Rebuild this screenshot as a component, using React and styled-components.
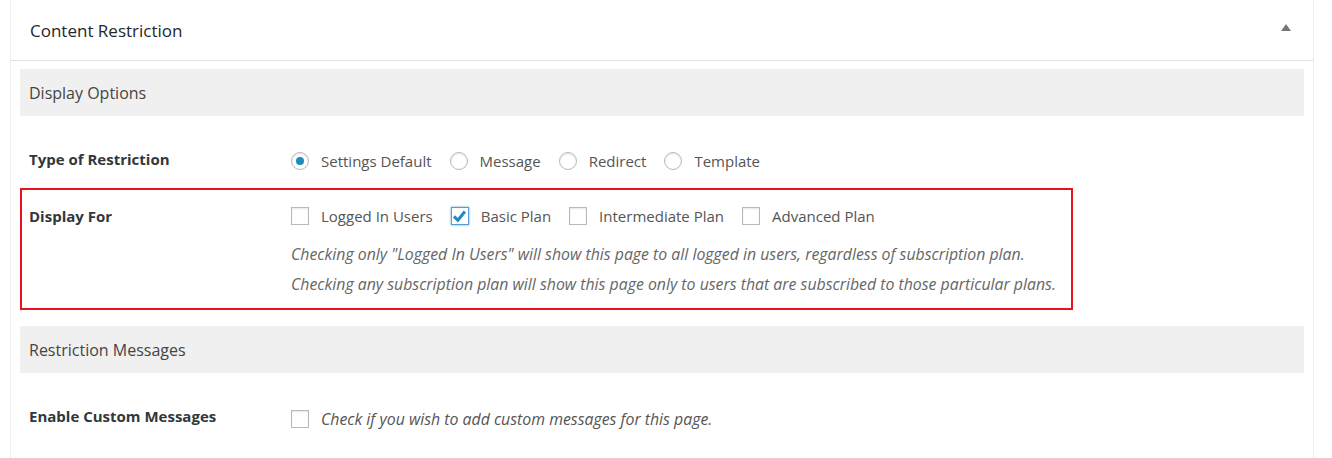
import React from "react";
import styled, { createGlobalStyle } from "styled-components";

const GlobalStyle = createGlobalStyle`
    html, body {
        margin: 0;
        padding: 0;
        background: #fff;
    }
    body {
        font-family: "Open Sans", "Noto Sans", sans-serif;
        font-size: 15px;
        color: #444;
    }
`;

const Postbox = styled.div`
    margin: 0 18px 0 10px;
    border-left: 1px solid #eeeeee;
    border-right: 1px solid #eeeeee;
    background: #fff;
    min-height: 458px;
    box-sizing: border-box;
`;

const Header = styled.div`
    height: 61px;
    display: flex;
    align-items: center;
    justify-content: space-between;
    padding: 0 22px 0 19px;
    border-bottom: 1px solid #e2e2e2;
    box-sizing: border-box;
`;

const Title = styled.h2`
    margin: 0;
    font-size: 17px;
    font-weight: 400;
    color: #23282d;
`;

const Toggle = styled.span`
    width: 0;
    height: 0;
    border-left: 5px solid transparent;
    border-right: 5px solid transparent;
    border-bottom: 7px solid #72777c;
    margin-top: -6px;
`;

const Inside = styled.div`
    padding: 8px 9px 0 9px;
`;

const SectionBar = styled.div`
    height: 47px;
    background: #f0f0f0;
    display: flex;
    align-items: center;
    padding-left: 9px;
    font-size: 16px;
    color: #444;
`;

const Row = styled.div`
    display: flex;
    align-items: flex-start;
    height: 72px;
    box-sizing: border-box;
    padding: 33px 9px 0 9px;
`;

const Highlight = styled.div`
    width: 1053px;
    height: 122px;
    box-sizing: border-box;
    border: 2px solid #e8141c;
    margin-bottom: 16px;
    display: flex;
    align-items: flex-start;
    padding: 16px 0 0 7px;
`;

const Label = styled.div`
    width: 262px;
    flex-shrink: 0;
    font-weight: 700;
    font-size: 15px;
    line-height: 20px;
    color: #32373c;
`;

const Field = styled.div`
    display: flex;
    flex-direction: column;
    margin-top: ${({ $offset }) => $offset || 0}px;
`;

const Options = styled.div`
    display: flex;
    align-items: center;
    line-height: 20px;
`;

const Option = styled.label`
    display: flex;
    align-items: center;
    margin-right: 18px;
    color: #555;
    font-size: 15px;
`;

const Radio = styled.span`
    width: 16px;
    height: 16px;
    border-radius: 50%;
    border: 1px solid #b4b9be;
    box-shadow: inset 0 1px 2px rgba(0, 0, 0, 0.1);
    display: flex;
    align-items: center;
    justify-content: center;
    margin-right: 12px;
    flex-shrink: 0;

    &::after {
        content: "";
        width: 8px;
        height: 8px;
        border-radius: 50%;
        background: #1e8cbe;
        display: ${({ $checked }) => ($checked ? "block" : "none")};
    }
`;

const Box = styled.span`
    width: 16px;
    height: 16px;
    border: 1px solid ${({ $checked }) => ($checked ? "#5b9dd9" : "#b4b9be")};
    box-shadow: ${({ $checked }) =>
        $checked
            ? "0 0 2px rgba(30, 140, 190, 0.8)"
            : "inset 0 1px 2px rgba(0, 0, 0, 0.1)"};
    display: flex;
    align-items: center;
    justify-content: center;
    margin-right: 12px;
    flex-shrink: 0;
`;

const Description = styled.p`
    margin: ${({ $gap }) => $gap}px 0 0 0;
    font-style: italic;
    font-size: 15.85px;
    line-height: 20px;
    color: #666;
`;

const Inline = styled.span`
    font-style: italic;
    font-size: 15.85px;
    color: #555;
`;

const Check = () => (
    <svg width="15" height="15" viewBox="0 0 15 15">
        <path d="M2 7.4 L5.9 11.3 L12.9 2.5" fill="none" stroke="#1e8cbe" strokeWidth="3" />
    </svg>
);

const Checkbox = ({ checked }) => (
    <Box $checked={checked}>{checked && <Check />}</Box>
);

const restrictions = ["Settings Default", "Message", "Redirect", "Template"];
const plans = [
    { name: "Logged In Users", checked: false },
    { name: "Basic Plan", checked: true },
    { name: "Intermediate Plan", checked: false },
    { name: "Advanced Plan", checked: false },
];

const App = () => {
    return (
        <>
            <GlobalStyle />
            <Postbox>
                <Header>
                    <Title>Content Restriction</Title>
                    <Toggle />
                </Header>
                <Inside>
                    <SectionBar>Display Options</SectionBar>
                    <Row>
                        <Label>Type of Restriction</Label>
                        <Field $offset={2}>
                            <Options>
                                {restrictions.map((r, i) => (
                                    <Option key={r}>
                                        <Radio $checked={i === 0} />
                                        {r}
                                    </Option>
                                ))}
                            </Options>
                        </Field>
                    </Row>
                    <Highlight>
                        <Label>Display For</Label>
                        <Field>
                            <Options>
                                {plans.map((p) => (
                                    <Option key={p.name}>
                                        <Checkbox checked={p.checked} />
                                        {p.name}
                                    </Option>
                                ))}
                            </Options>
                            <Description $gap={18}>
                                Checking only "Logged In Users" will show this page to all logged in users, regardless of subscription plan.
                            </Description>
                            <Description $gap={10}>
                                Checking any subscription plan will show this page only to users that are subscribed to those particular plans.
                            </Description>
                        </Field>
                    </Highlight>
                    <SectionBar>Restriction Messages</SectionBar>
                    <Row>
                        <Label>Enable Custom Messages</Label>
                        <Field $offset={3}>
                            <Options>
                                <Option>
                                    <Checkbox />
                                    <Inline>Check if you wish to add custom messages for this page.</Inline>
                                </Option>
                            </Options>
                        </Field>
                    </Row>
                </Inside>
            </Postbox>
        </>
    );
};

export default App;
